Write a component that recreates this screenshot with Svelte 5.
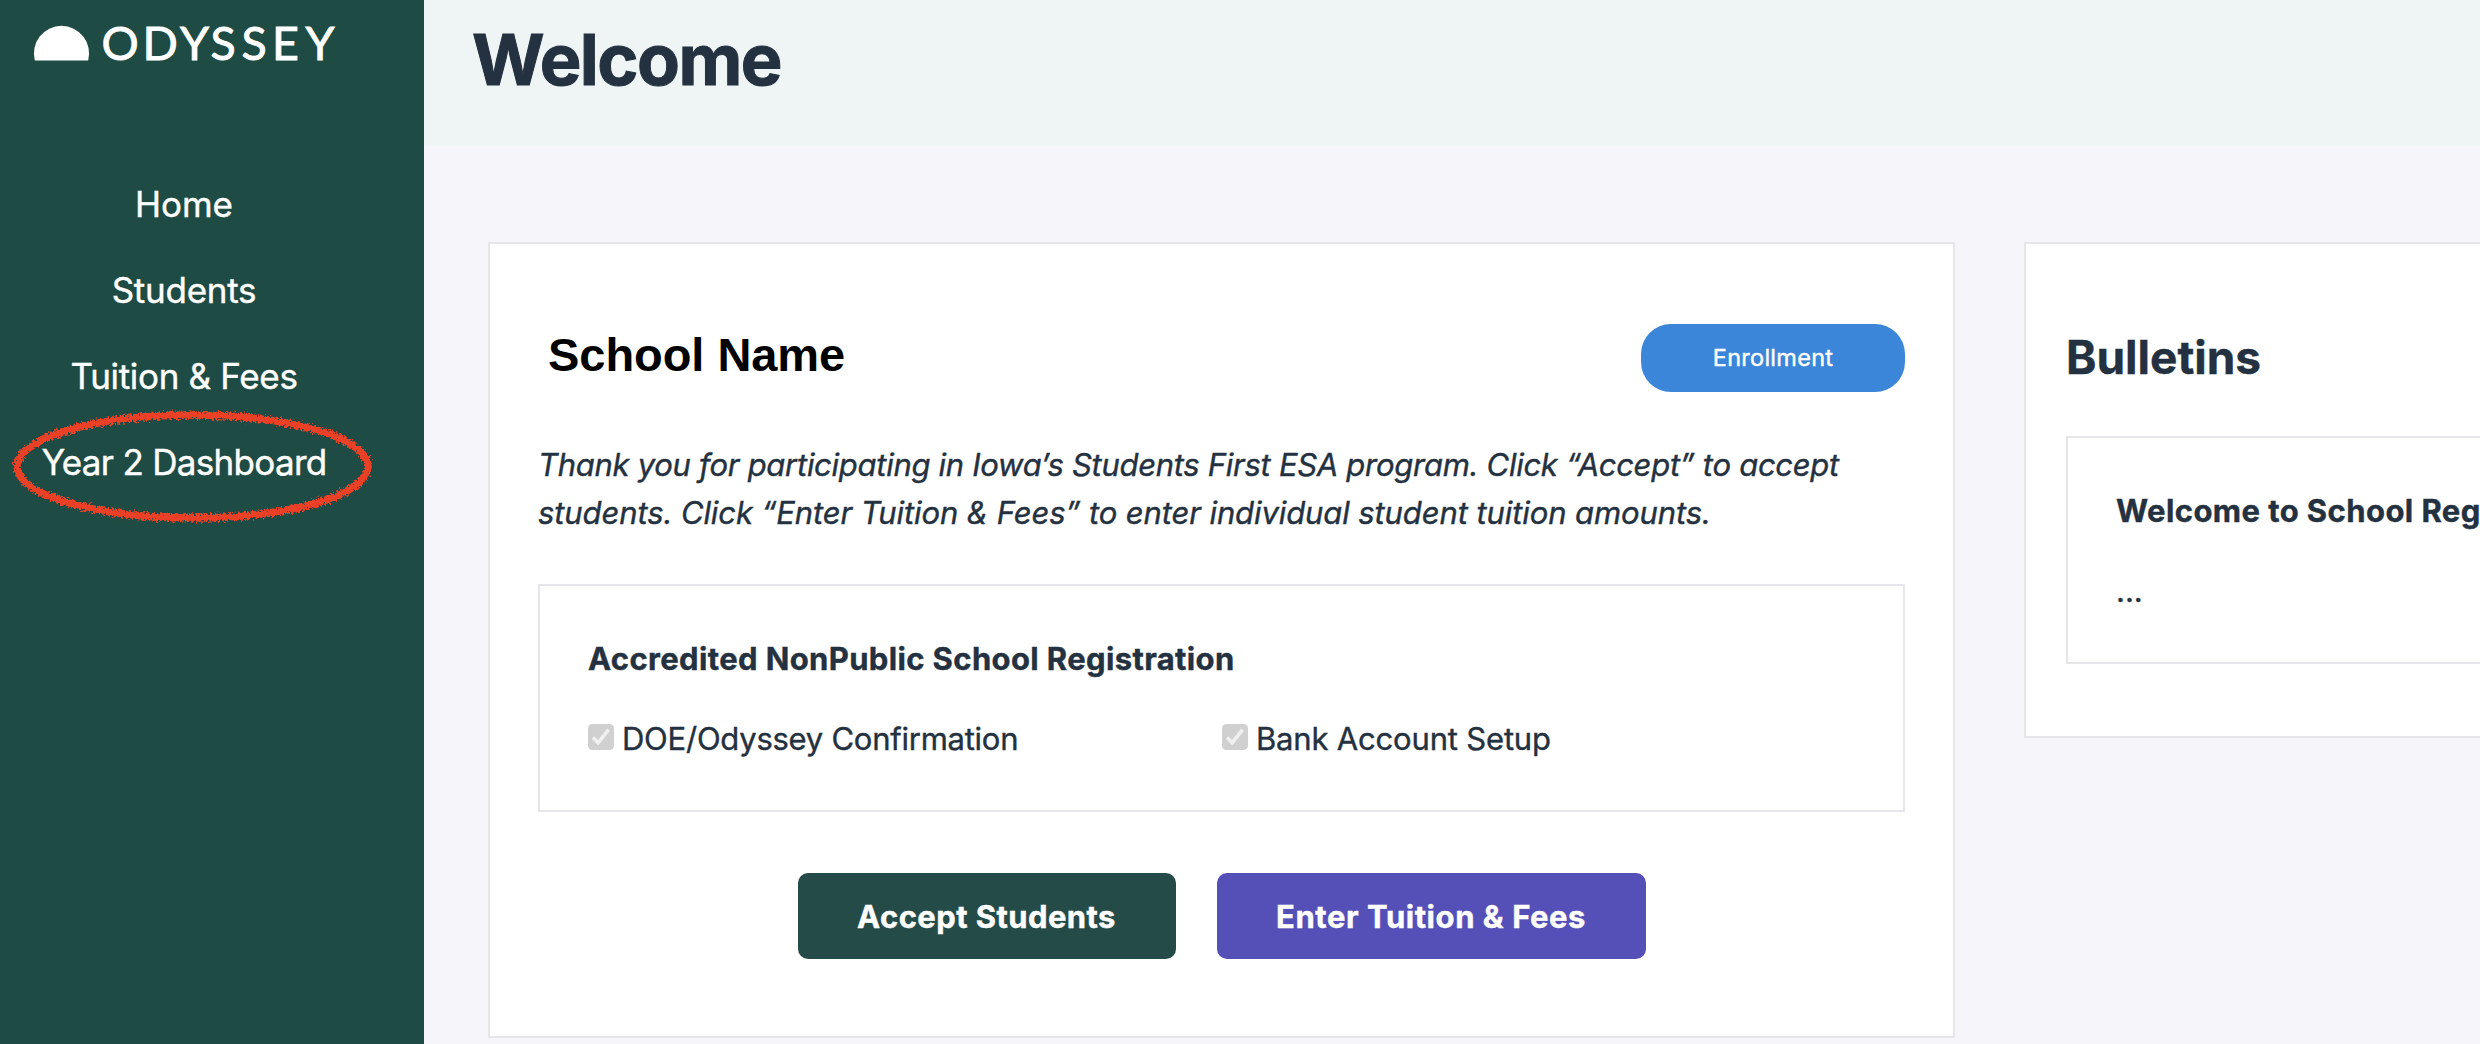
<script lang="ts">
  interface NavItem {
    label: string;
    tracking: number;
    circled?: boolean;
  }

  const navItems: NavItem[] = [
    { label: 'Home', tracking: -0.05 },
    { label: 'Students', tracking: -0.25 },
    { label: 'Tuition & Fees', tracking: -0.32 },
    { label: 'Year 2 Dashboard', tracking: -0.69, circled: true },
  ];

  const steps = [
    { label: 'DOE/Odyssey Confirmation', tracking: -0.25 },
    { label: 'Bank Account Setup', tracking: -0.18 },
  ];
</script>

<div class="app">
  <aside class="sidebar">
    <svg class="logo" width="320" height="48" viewBox="0 0 320 48" role="img" aria-label="Odyssey">
      <path d="M0.8 40.4 A27.6 27.6 0 1 1 54.2 40.4 Z" fill="#fff" />
      <text x="67.5 108.5 146 176.5 207.5 238 271.5" y="40">ODYSSEY</text>
    </svg>

    <nav>
      {#each navItems as item}
        <a href="#top" class="nav-item">
          <span style="letter-spacing: {item.tracking}px">{item.label}</span>
          {#if item.circled}
            <svg class="circle" width="380" height="130" viewBox="0 0 380 130">
              <filter id="rough" x="-5%" y="-5%" width="110%" height="110%">
                <feTurbulence type="fractalNoise" baseFrequency="0.45" numOctaves="3" seed="4" />
                <feDisplacementMap in="SourceGraphic" scale="8" xChannelSelector="R" yChannelSelector="G" />
              </filter>
              <ellipse cx="189.5" cy="64.5" rx="175.5" ry="51.5" filter="url(#rough)" />
            </svg>
          {/if}
        </a>
      {/each}
    </nav>
  </aside>

  <main>
    <header>
      <h1>Welcome</h1>
    </header>

    <div class="content">
      <section class="card school">
        <div class="school-head">
          <h2>School Name</h2>
          <span class="pill">Enrollment</span>
        </div>

        <p class="intro">
          <span class="line-one">Thank you for participating in Iowa’s Students First ESA program. Click “Accept” to accept</span><br />
          <span class="line-two">students. Click “Enter Tuition &amp; Fees” to enter individual student tuition amounts.</span>
        </p>

        <div class="box">
          <h3 class="registration">Accredited NonPublic School Registration</h3>
          <div class="steps">
            {#each steps as step}
              <div class="step">
                <svg class="check" width="26" height="26" viewBox="0 0 26 26">
                  <rect width="26" height="26" rx="4.5" fill="#d0d0d0" />
                  <path d="M5 13.4 L10.2 18.8 L20.6 5.6" />
                </svg>
                <span style="letter-spacing: {step.tracking}px">{step.label}</span>
              </div>
            {/each}
          </div>
        </div>

        <div class="actions">
          <button class="accept">Accept Students</button>
          <button class="tuition">Enter Tuition &amp; Fees</button>
        </div>
      </section>

      <section class="card bulletins">
        <h2>Bulletins</h2>
        <div class="box">
          <h3>Welcome to School Registration</h3>
          <p>...</p>
        </div>
      </section>
    </div>
  </main>
</div>

<style>
  :global(body) {
    overflow: hidden;
  }

  .app {
    display: flex;
    width: 100%;
    height: 1044px;
    overflow: hidden;
    background: #f5f5fa;
    color: #243140;
    font-family: Inter, 'Liberation Sans', sans-serif;
    font-size: 31px;
    line-height: 48px;
    -webkit-text-stroke: 0.4px;
  }

  h1,
  h2,
  h3,
  p {
    margin: 0;
  }

  .sidebar {
    flex: none;
    box-sizing: border-box;
    width: 424px;
    padding-top: 20px;
    background: #1f4b45;
  }

  .logo {
    display: block;
    margin-left: 34px;
    overflow: visible;
  }

  .logo text {
    fill: #fff;
    stroke: #fff;
    stroke-width: 0.9;
    font-family: Lato, sans-serif;
    font-size: 46.5px;
  }

  nav {
    display: flex;
    flex-direction: column;
    width: 368px;
    margin-top: 93px;
  }

  .nav-item {
    position: relative;
    color: #fff;
    font-size: 35px;
    line-height: 86px;
    text-align: center;
    text-decoration: none;
    white-space: nowrap;
  }

  .circle {
    position: absolute;
    top: -17px;
    left: 3px;
  }

  .circle ellipse {
    fill: none;
    stroke: #ea4025;
    stroke-width: 7.5;
  }

  main {
    flex: 1;
    min-width: 0;
  }

  header {
    box-sizing: border-box;
    height: 146px;
    padding: 24px 48px 0;
    background: #eff5f5;
  }

  h1 {
    font-size: 70px;
    line-height: 72px;
    letter-spacing: -1.5px;
    -webkit-text-stroke: 1px;
  }

  .content {
    display: flex;
    align-items: flex-start;
    gap: 69px;
    padding: 96px 0 0 64px;
  }

  .card {
    flex: none;
    box-sizing: border-box;
    border: 2px solid #e6e6ea;
    background: #fff;
  }

  .school {
    width: 1467px;
    height: 796px;
    padding: 80px 48px 0;
  }

  .school-head {
    display: flex;
    align-items: center;
    justify-content: space-between;
    height: 68px;
  }

  .school-head h2 {
    padding: 0 0 6px 10px;
    color: #000;
    font-family: 'Liberation Sans', Arial, sans-serif;
    font-size: 47px;
    letter-spacing: -0.05px;
    -webkit-text-stroke: 0;
  }

  .pill {
    width: 264px;
    border-radius: 30px;
    background: #3c86d9;
    color: #fff;
    font-size: 23.5px;
    line-height: 68px;
    letter-spacing: 0.27px;
    text-align: center;
  }

  .intro {
    margin-top: 49px;
    font-style: italic;
    white-space: nowrap;
  }

  .line-one {
    letter-spacing: -0.284px;
  }

  .line-two {
    letter-spacing: -0.1px;
  }

  .box {
    box-sizing: border-box;
    height: 228px;
    padding: 49px 48px 0;
    border: 2px solid #e6e6ea;
  }

  .box h3 {
    font-size: 31px;
    letter-spacing: 0.42px;
    white-space: nowrap;
  }

  .box h3.registration {
    letter-spacing: 0.37px;
  }

  .school .box {
    margin-top: 47px;
  }

  .steps {
    display: grid;
    grid-template-columns: 634px 1fr;
    margin-top: 32px;
  }

  .step {
    display: flex;
    gap: 8px;
  }

  .check {
    flex: none;
    margin-top: 9px;
  }

  .check path {
    fill: none;
    stroke: #f0f0f0;
    stroke-width: 3.6;
  }

  .actions {
    display: flex;
    justify-content: center;
    gap: 41px;
    margin-top: 61px;
  }

  button {
    height: 86px;
    padding: 1px 0 0;
    border: 0;
    border-radius: 10px;
    color: #fff;
    font: 700 31px Inter, sans-serif;
  }

  .accept {
    width: 378px;
    background: #254b48;
    letter-spacing: 0.43px;
  }

  .tuition {
    width: 429px;
    background: #5450b8;
    letter-spacing: 0.55px;
  }

  .bulletins {
    width: 700px;
    padding: 85px 40px 72px;
  }

  .bulletins h2 {
    margin-bottom: 51px;
    font-size: 46px;
    line-height: 56px;
  }

  .bulletins p {
    margin-top: 32px;
  }
</style>
